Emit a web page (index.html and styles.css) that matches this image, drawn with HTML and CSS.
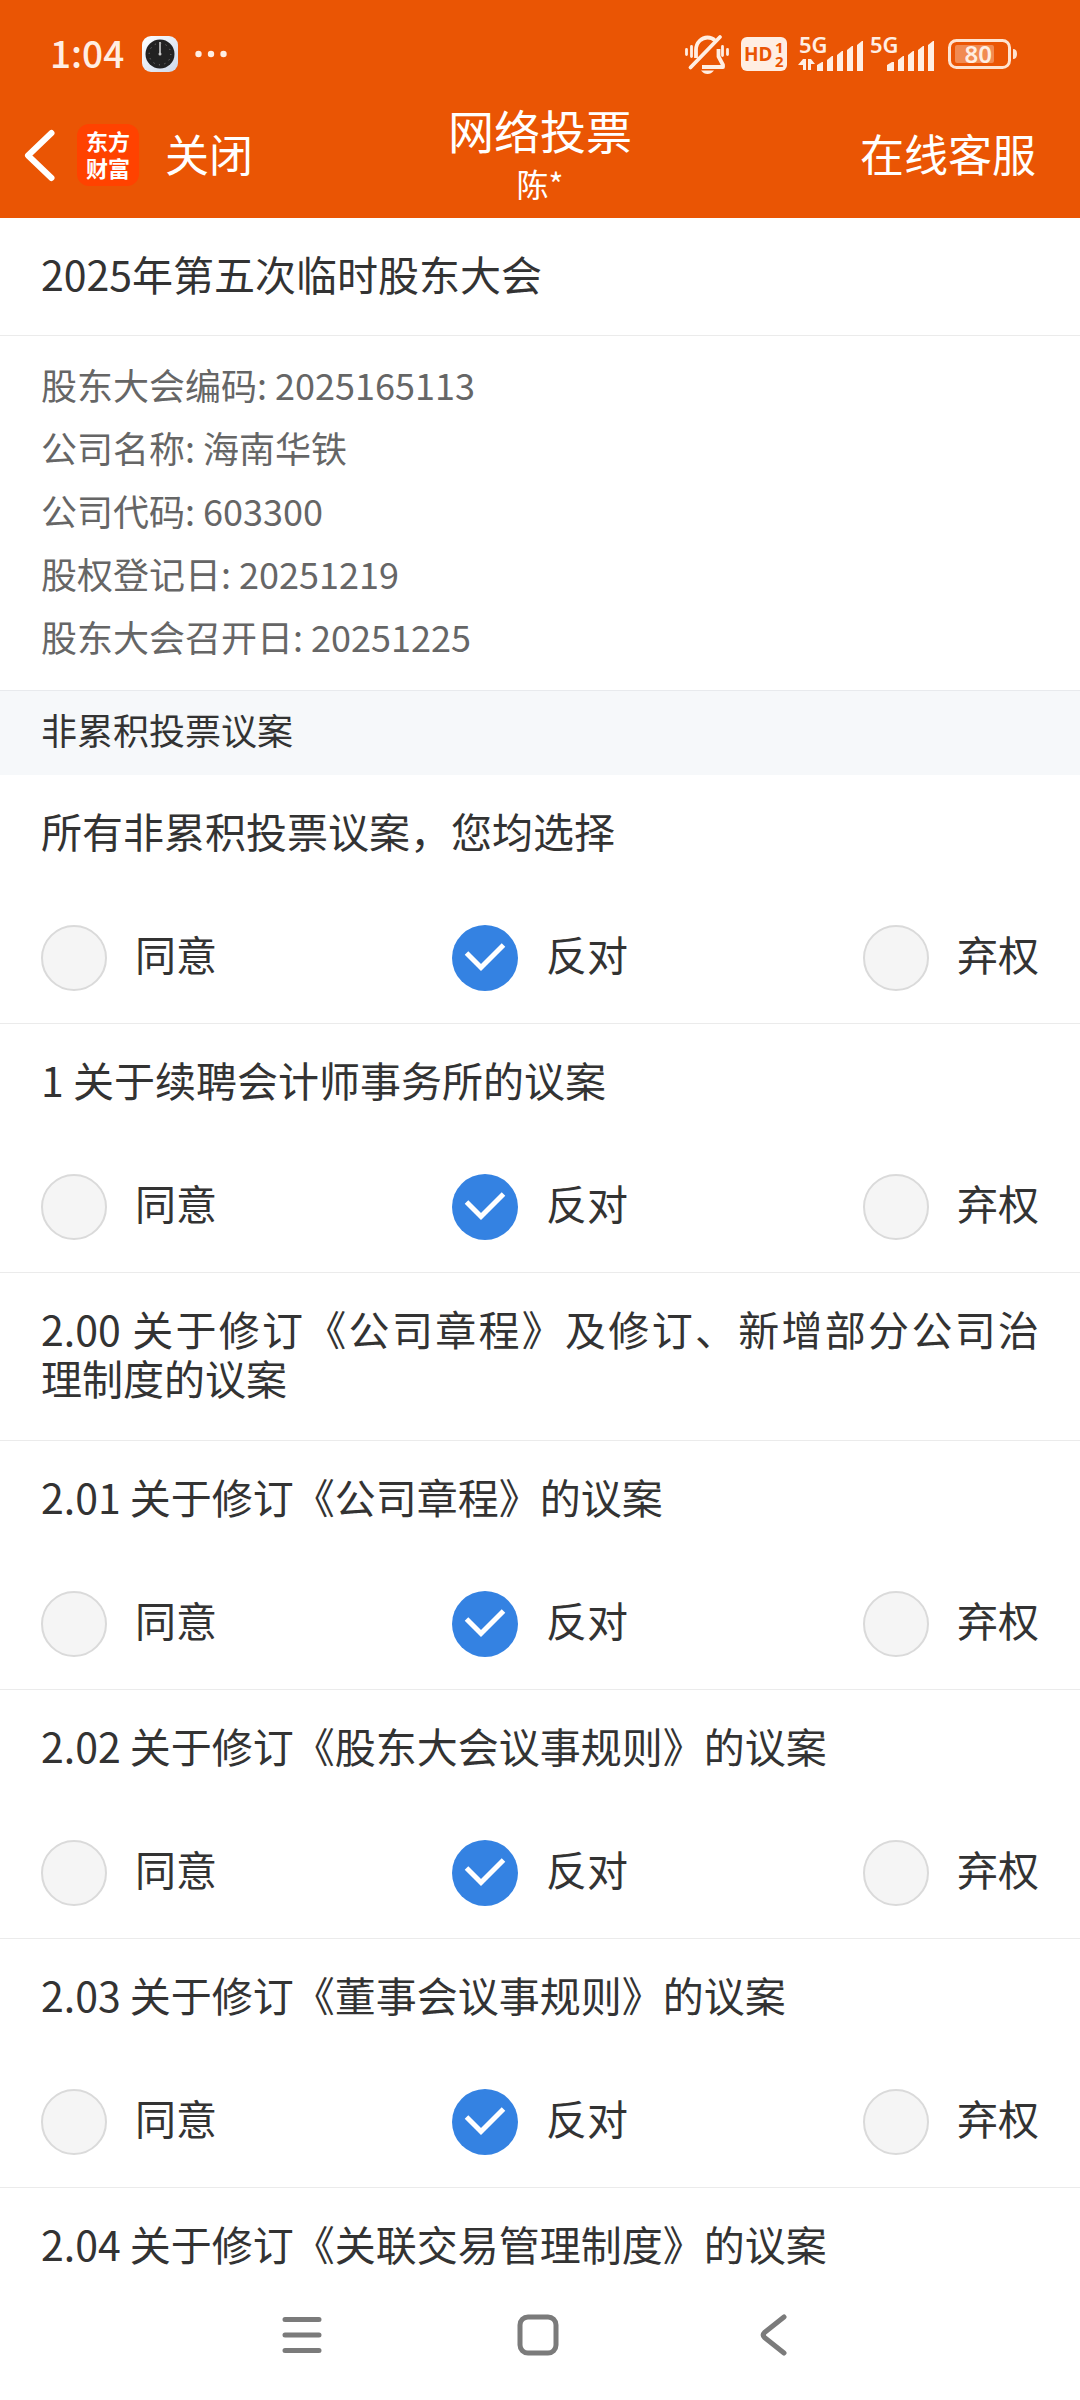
FILE: index.html
```html
<!DOCTYPE html>
<html lang="zh-CN">
<head>
<meta charset="utf-8">
<meta name="viewport" content="width=device-width">
<title>网络投票</title>
<link rel="stylesheet" href="styles.css">
</head>
<body>
<header class="top">
  <div class="status">
    <div class="status-left">
      <span class="time">1:04</span>
      <svg class="clock" width="36" height="36" viewBox="0 0 36 36" aria-hidden="true">
        <defs><linearGradient id="face" x1="0" y1="0" x2="1" y2="1"><stop offset="0" stop-color="#fff"/><stop offset="1" stop-color="#cdd8ea"/></linearGradient></defs>
        <rect width="36" height="36" rx="9" fill="url(#face)"/>
        <circle cx="18" cy="18" r="14.5" fill="#222"/>
        <circle cx="18" cy="18" r="10.8" fill="none" stroke="#8a8a8a" stroke-width="1" stroke-dasharray="1 4.65"/>
        <path d="M18 6v12" stroke="#aaa" stroke-width="2"/>
        <circle cx="18" cy="18" r="1.5" fill="#ccc"/>
      </svg>
      <svg width="32" height="8" viewBox="0 0 32 8" fill="#ffeee3" aria-hidden="true"><circle cx="3.500" cy="4" r="3.200"/><circle cx="16" cy="4" r="3.200"/><circle cx="28.500" cy="4" r="3.200"/></svg>
    </div>
    <div class="status-right">
      <svg width="46" height="40" viewBox="0 0 46 40" fill="none" stroke="#ffeee3" stroke-width="3" aria-hidden="true">
        <path d="M12 24V16C12 8 18 3.500 23.500 3.500c3 0 5.500 1 7.500 3M34.500 15v7.500L39 31v2H18" stroke-width="3.800" stroke-linejoin="round"/>
        <path d="M6.500 33.500 36 3" stroke-width="3.800" stroke-linecap="round"/>
        <path d="M2.500 15.500v5M7.500 12.500v10M38.500 12.500v9M43.500 15.500v5" stroke-width="2.800" stroke-linecap="round"/>
        <path d="M17 36.500h13c-2 2.500-4 3.500-6.500 3.500s-4.500-1-6.500-3.500z" fill="#ffeee3" stroke="none"/>
      </svg>
      <svg width="46" height="34" viewBox="0 0 46 34" aria-hidden="true">
        <rect width="46" height="34" rx="6" fill="#ffeee3"/>
        <text class="tag" x="3" y="24" font-size="19">HD</text>
        <text class="tag" x="34" y="16" font-size="15">1</text>
        <text class="tag" x="34" y="30" font-size="15">2</text>
      </svg>
      <svg width="66" height="36" viewBox="0 0 66 36" fill="#ffeee3" aria-hidden="true">
        <text class="net" x="1" y="17" font-size="22">5G</text>
        <path d="M5 23h3v11H5v-5H0zM10 23h3l4 5h-4v6h-3z"/>
        <path d="M19 29l5-3h1v9h-6zM29 24l5-4h1v15h-6zM39 19l5-4h1v20h-6zM49 14l5-4h1v25h-6zM59 9l5-4h1v30h-6z"/>
      </svg>
      <svg width="66" height="36" viewBox="0 0 66 36" fill="#ffeee3" aria-hidden="true">
        <text class="net" x="1" y="17" font-size="22">5G</text>
        <path d="M18 29l5-3h2v9h-7zM29 24l5-4h1v15h-6zM39 19l5-4h1v20h-6zM49 14l5-4h1v25h-6zM59 9l5-4h1v30h-6z"/>
      </svg>
      <svg class="battery" width="70" height="30" viewBox="0 0 70 30" aria-hidden="true">
        <rect x="1.500" y="1.500" width="60" height="27" rx="7" fill="none" stroke="#ffe3d0" stroke-width="3"/>
        <rect x="7" y="6" width="39" height="18" rx="2" fill="#f18b52"/>
        <path d="M65 10q4 0 4 5t-4 5z" fill="#ffe3d0"/>
        <text class="net" x="16.500" y="23.500" font-size="24">80</text>
      </svg>
    </div>
  </div>
  <nav class="bar">
    <div class="bar-left">
      <button class="back" type="button" aria-label="返回">
        <svg width="30" height="52" viewBox="0 0 30 52" fill="none" stroke="#fff" stroke-width="6"><path d="M27.500 4 4 26.500 27.500 49" stroke-linecap="round" stroke-linejoin="round"/></svg>
      </button>
      <span class="logo">东方<br>财富</span>
      <button class="action" type="button">关闭</button>
    </div>
    <div class="heading">
      <h1>网络投票</h1>
      <p>陈*</p>
    </div>
    <a class="action service" href="#service">在线客服</a>
  </nav>
</header>
<main>
  <h2 class="meeting">2025年第五次临时股东大会</h2>
  <ul class="info">
    <li>股东大会编码: 2025165113</li>
    <li>公司名称: 海南华铁</li>
    <li>公司代码: 603300</li>
    <li>股权登记日: 20251219</li>
    <li>股东大会召开日: 20251225</li>
  </ul>
  <h3 class="section">非累积投票议案</h3>
  <fieldset class="item">
    <legend>所有非累积投票议案，您均选择</legend>
    <div class="options">
      <label><input type="radio" name="all"><span>同意</span></label>
      <label><input type="radio" name="all" checked><span>反对</span></label>
      <label><input type="radio" name="all"><span>弃权</span></label>
    </div>
  </fieldset>
  <fieldset class="item">
    <legend>1 关于续聘会计师事务所的议案</legend>
    <div class="options">
      <label><input type="radio" name="p1"><span>同意</span></label>
      <label><input type="radio" name="p1" checked><span>反对</span></label>
      <label><input type="radio" name="p1"><span>弃权</span></label>
    </div>
  </fieldset>
  <div class="item group">
    <p>2.00 关于修订《公司章程》及修订、新增部分公司治<span class="phrase">理制度</span>的议案</p>
  </div>
  <fieldset class="item">
    <legend>2.01 关于修订《公司章程》的议案</legend>
    <div class="options">
      <label><input type="radio" name="p201"><span>同意</span></label>
      <label><input type="radio" name="p201" checked><span>反对</span></label>
      <label><input type="radio" name="p201"><span>弃权</span></label>
    </div>
  </fieldset>
  <fieldset class="item">
    <legend>2.02 关于修订《股东大会议事规则》的议案</legend>
    <div class="options">
      <label><input type="radio" name="p202"><span>同意</span></label>
      <label><input type="radio" name="p202" checked><span>反对</span></label>
      <label><input type="radio" name="p202"><span>弃权</span></label>
    </div>
  </fieldset>
  <fieldset class="item">
    <legend>2.03 关于修订《董事会议事规则》的议案</legend>
    <div class="options">
      <label><input type="radio" name="p203"><span>同意</span></label>
      <label><input type="radio" name="p203" checked><span>反对</span></label>
      <label><input type="radio" name="p203"><span>弃权</span></label>
    </div>
  </fieldset>
  <div class="item last">
    <p>2.04 关于修订《关联交易管理制度》的议案</p>
  </div>
</main>
<footer class="keys">
  <button type="button" aria-label="菜单"><svg width="42" height="42" viewBox="0 0 42 42" stroke="#7b7b7b" stroke-width="5" stroke-linecap="round"><path d="M4 5.500h34M4 21h34M4 36.500h34"/></svg></button>
  <button type="button" aria-label="主页"><svg width="42" height="42" viewBox="0 0 42 42" fill="none" stroke="#7b7b7b" stroke-width="5"><rect x="3" y="3" width="36" height="36" rx="8"/></svg></button>
  <button type="button" aria-label="返回"><svg width="42" height="42" viewBox="0 0 42 42" fill="none" stroke="#7b7b7b" stroke-width="5" stroke-linecap="round" stroke-linejoin="round"><path d="M31 3 11.500 18.500q-2.500 2.500 0 5L31 39"/></svg></button>
</footer>
</body>
</html>
```
FILE: styles.css
```css
* {
  box-sizing: border-box;
}

body {
  margin: 0;
  min-height: 100vh;
  display: flex;
  flex-direction: column;
  background: #fff;
  color: #333;
  font-family: "Noto Sans CJK SC", "Noto Sans", sans-serif;
  font-size: 41px;
  line-height: 49px;
}

h1, h2, h3, p, ul {
  margin: 0;
  padding: 0;
  font-weight: 400;
}

button {
  padding: 0;
  border: 0;
  background: none;
  color: inherit;
  font: inherit;
}

svg {
  display: block;
  overflow: visible;
}

.top {
  background: #ea5504;
  color: #fff;
}

.status {
  display: flex;
  justify-content: space-between;
  align-items: center;
  height: 92px;
  padding: 16px 62px 0 50px;
  color: #ffeee3;
}

.status-left,
.status-right {
  display: flex;
  align-items: center;
}

.time {
  padding-bottom: 4px;
  font-size: 37px;
  font-weight: 500;
}

.clock {
  margin: 0 17px 0 18px;
}

.status-right {
  gap: 11px;
}

.status-right svg + svg + svg + svg {
  margin-left: -6px;
}

.status-right .battery.battery {
  margin-left: 2px;
}

.tag,
.net {
  font-family: "Noto Sans", sans-serif;
}

.tag {
  font-weight: 700;
  fill: #ea5504;
}

.net {
  font-weight: 600;
  fill: #ffeee3;
}

.bar {
  display: grid;
  grid-template-columns: 1fr auto 1fr;
  align-items: center;
  height: 126px;
  padding: 0 44px 0 24px;
}

.bar-left {
  display: flex;
  align-items: center;
}

.logo {
  margin: 0 26px 0 23px;
  padding: 3px 0;
  width: 62px;
  height: 62px;
  border-radius: 12px;
  background: #ff4200;
  font-size: 22px;
  font-weight: 700;
  line-height: 27px;
  text-align: center;
}

.action {
  padding-bottom: 4px;
  color: #fff;
  font-size: 44px;
  text-decoration: none;
}

.service {
  justify-self: end;
}

.heading {
  padding: 0 0 4px 20px;
  text-align: center;
}

.heading h1 {
  font-size: 46px;
  line-height: 60px;
}

.heading p {
  font-size: 32px;
  line-height: 48px;
}

.meeting {
  padding: 31px 41px 37px;
  border-bottom: 1px solid #ebebeb;
  font-size: 41px;
}

.info {
  padding: 17px 41px 22px;
  color: #666;
  font-size: 36px;
  line-height: 63px;
  list-style: none;
}

.section {
  padding: 14px 41px 21px;
  border-top: 1px solid #e8eaed;
  background: #f6f8fa;
  font-size: 36px;
}

.item {
  min-width: 0;
  margin: 0;
  padding: 31px 41px 32px;
  border: 0;
  border-bottom: 1px solid #ebebeb;
  text-align: justify;
}

.item legend {
  float: left;
  width: 100%;
  padding: 0;
}

.options {
  clear: both;
  display: flex;
  justify-content: space-between;
  padding-top: 70px;
}

.options label {
  display: flex;
  align-items: center;
  gap: 28px;
}

.options span {
  padding-bottom: 10px;
}

.options input {
  appearance: none;
  width: 66px;
  height: 66px;
  margin: 0;
  border: 2px solid #dadada;
  border-radius: 50%;
  background: #f5f5f5;
}

.options input:checked {
  border: 0;
  background: #3482e2 url("data:image/svg+xml,%3Csvg xmlns='http://www.w3.org/2000/svg' viewBox='0 0 66 66' fill='none' stroke='white' stroke-width='5'%3E%3Cpath d='M14.500 28 29 42.500 51.500 20'/%3E%3C/svg%3E");
}

.group {
  padding-bottom: 38px;
}

.phrase {
  white-space: nowrap;
}

.last {
  padding-bottom: 0;
  border: 0;
}

.keys {
  display: grid;
  grid-template-columns: repeat(3, 1fr);
  height: 128px;
  margin-top: auto;
  padding: 0 188px 2px 184px;
  background: #fff;
}

.keys button {
  display: grid;
  place-items: center;
}
```
